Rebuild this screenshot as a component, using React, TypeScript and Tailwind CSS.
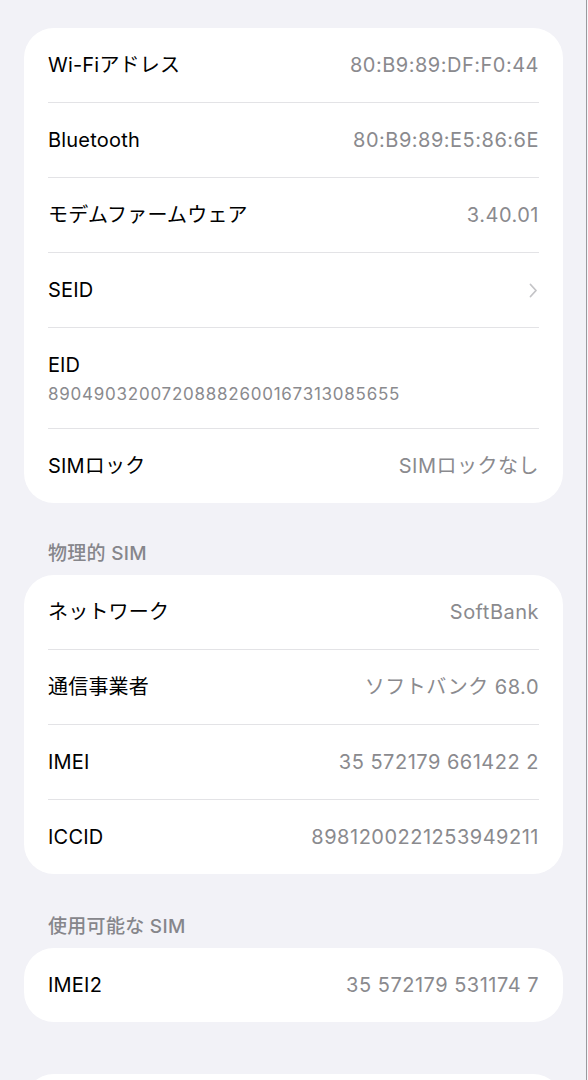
import { ReactNode } from "react";

type Row = {
    label: string;
    value?: string;
    chevron?: boolean;
    sub?: string;
};

const mainRows: Row[] = [
    { label: "Wi-Fiアドレス", value: "80:B9:89:DF:F0:44" },
    { label: "Bluetooth", value: "80:B9:89:E5:86:6E" },
    { label: "モデムファームウェア", value: "3.40.01" },
    { label: "SEID", chevron: true },
    { label: "EID", sub: "89049032007208882600167313085655" },
    { label: "SIMロック", value: "SIMロックなし" },
];

const physicalRows: Row[] = [
    { label: "ネットワーク", value: "SoftBank" },
    { label: "通信事業者", value: "ソフトバンク 68.0" },
    { label: "IMEI", value: "35 572179 661422 2" },
    { label: "ICCID", value: "8981200221253949211" },
];

const availableRows: Row[] = [{ label: "IMEI2", value: "35 572179 531174 7" }];

const Chevron = () => (
    <svg width="9" height="15" viewBox="0 0 9 15" fill="none">
        <path d="M1.5 1.5L7 7.5L1.5 13.5" stroke="#c4c4c7" strokeWidth="1.8" strokeLinecap="round" strokeLinejoin="round" />
    </svg>
);

const RowItem = ({ row }: { row: Row }) => {
    if (row.sub) {
        return (
            <div className="px-6 pt-[25px] pb-[24px]">
                <div className="text-[20px] leading-[24px] text-black">{row.label}</div>
                <div className="mt-[7px] text-[17px] leading-[20px] text-[#8a8a8e] tracking-[0.75px]">{row.sub}</div>
            </div>
        );
    }
    return (
        <div className="h-[74px] px-6 flex items-center justify-between">
            <span className="text-[20px] leading-[24px] text-black tracking-[0.2px]">{row.label}</span>
            {row.chevron ? (
                <span className="pr-[1px]"><Chevron /></span>
            ) : (
                <span className="text-[20px] leading-[24px] text-[#8a8a8e] tracking-[0.5px]">{row.value}</span>
            )}
        </div>
    );
};

const Card = ({ rows }: { rows: Row[] }) => (
    <div className="bg-white rounded-[30px] overflow-hidden">
        {rows.map((row, index) => (
            <div key={index}>
                {index > 0 && <div className="mx-6 h-px bg-[#e3e3e6]" />}
                <RowItem row={row} />
            </div>
        ))}
    </div>
);

const SectionHeader = ({ children }: { children: ReactNode }) => (
    <div className="px-6 text-[19px] leading-[22px] font-medium text-[#86868b] tracking-[0.3px]">{children}</div>
);

export default function App() {
    return (
        <div
            className="w-[588px] h-[1080px] overflow-hidden flex bg-[#f2f2f7]"
            style={{ fontFamily: 'Inter, "Noto Sans CJK JP", sans-serif' }}
        >
            <div className="w-[586px] pl-6 pr-[23px] pt-[28px]">
                <Card rows={mainRows} />

                <div className="mt-[40px] mb-[10px]">
                    <SectionHeader>物理的 SIM</SectionHeader>
                </div>
                <Card rows={physicalRows} />

                <div className="mt-[42px] mb-[10px]">
                    <SectionHeader>使用可能な SIM</SectionHeader>
                </div>
                <Card rows={availableRows} />

                <div className="mt-[52px] h-[80px] bg-white rounded-[30px]" />
            </div>
            <div className="w-px h-full bg-[#9a9a9e]" />
            <div className="w-px h-full bg-[#f7f7fa]" />
        </div>
    );
}
